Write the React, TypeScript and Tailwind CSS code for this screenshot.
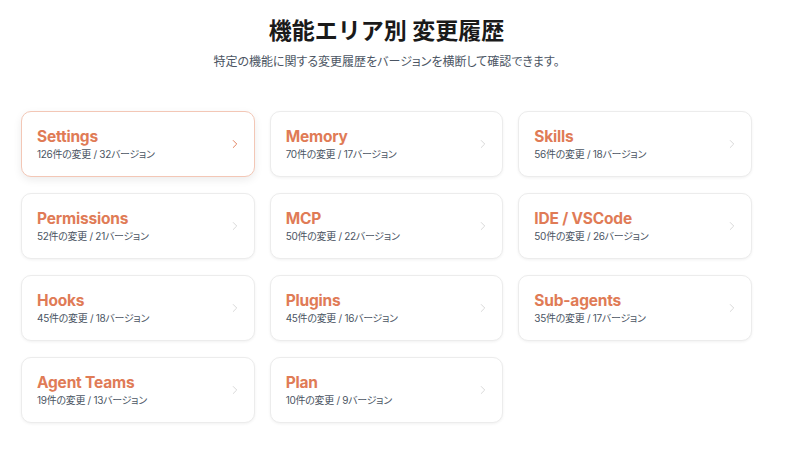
import { ChevronRight } from "lucide-react";

interface Area {
  name: string;
  changes: number;
  versions: number;
}

const areas: Area[] = [
  { name: "Settings", changes: 126, versions: 32 },
  { name: "Memory", changes: 70, versions: 17 },
  { name: "Skills", changes: 56, versions: 18 },
  { name: "Permissions", changes: 52, versions: 21 },
  { name: "MCP", changes: 50, versions: 22 },
  { name: "IDE / VSCode", changes: 50, versions: 26 },
  { name: "Hooks", changes: 45, versions: 18 },
  { name: "Plugins", changes: 45, versions: 16 },
  { name: "Sub-agents", changes: 35, versions: 17 },
  { name: "Agent Teams", changes: 19, versions: 13 },
  { name: "Plan", changes: 10, versions: 9 },
];

function AreaCard({ area, active }: { area: Area; active: boolean }) {
  return (
    <a
      href="#"
      className={
        active
          ? "flex items-center justify-between h-[66px] pl-[15px] pr-[12px] bg-white rounded-[10px] border border-[#f3c7b6] shadow-[0_3px_8px_rgba(0,0,0,0.08)]"
          : "flex items-center justify-between h-[66px] pl-[15px] pr-[12px] bg-white rounded-[10px] border border-[#ececec] shadow-[0_1px_3px_rgba(0,0,0,0.06)]"
      }
    >
      <div className="flex flex-col">
        <span className="text-[15.5px] leading-[20px] font-bold text-[#e07b56] tracking-[-0.2px]">
          {area.name}
        </span>
        <span className="text-[10px] leading-[14px] text-[#4b5563] tracking-[-0.3px] [font-feature-settings:'palt']">
          {area.changes}件の変更 / {area.versions}バージョン
        </span>
      </div>
      <ChevronRight
        size={14}
        strokeWidth={1.6}
        className={active ? "text-[#e07b56]" : "text-[#d6d6d6]"}
      />
    </a>
  );
}

export default function App() {
  return (
    <div
      className="min-h-[453px] bg-white pl-[21px] pr-[48px]"
      style={{ fontFamily: 'Inter, "Noto Sans CJK JP", sans-serif' }}
    >
      {/* 見出し */}
      <div className="flex flex-col items-center pt-[16px]">
        <h1 className="text-[23px] leading-[30px] font-bold text-[#1a1a1a]">
          機能エリア別 変更履歴
        </h1>
        <p className="mt-[8px] text-[12px] leading-[16px] text-[#4b5563] [font-feature-settings:'palt']">
          特定の機能に関する変更履歴をバージョンを横断して確認できます。
        </p>
      </div>

      {/* カード一覧 */}
      <div className="grid grid-cols-3 gap-x-[15px] gap-y-[16px] mt-[41px]">
        {areas.map((a, i) => (
          <AreaCard key={a.name} area={a} active={i === 0} />
        ))}
      </div>
    </div>
  );
}
